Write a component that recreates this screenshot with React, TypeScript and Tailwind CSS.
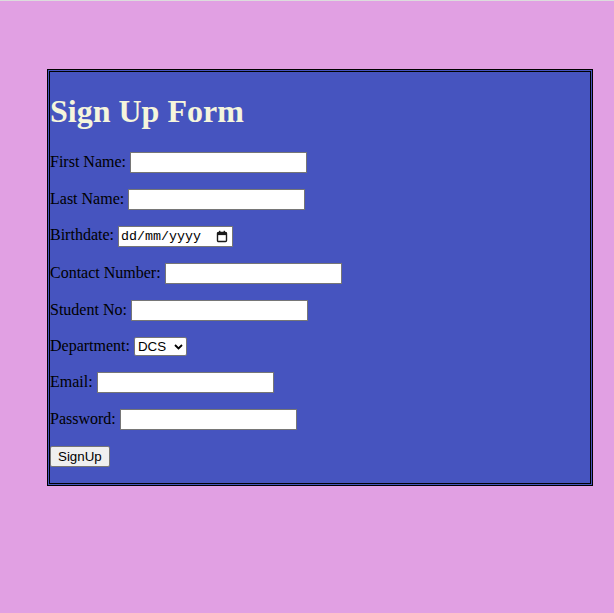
const textFields = [
  { label: "First Name", type: "text" },
  { label: "Last Name", type: "text" },
];

const moreFields = [
  { label: "Contact Number", type: "text" },
  { label: "Student No", type: "text" },
];

const inputCls =
  "inline-block w-[177px] h-[21px] border border-[#767676] bg-white px-[2px] py-[1px] align-baseline font-['Liberation_Sans',Arial,sans-serif] text-[13.33px] text-black";

const CalendarIcon = () => (
  <svg width="12" height="13" viewBox="0 0 12 13" className="block">
    <rect x="1.5" y="2.5" width="9" height="9" rx="1" fill="none" stroke="#1a1a1a" strokeWidth="1.4" />
    <rect x="1.5" y="2.5" width="9" height="2.6" fill="#1a1a1a" />
    <rect x="3" y="0.8" width="1.4" height="2" fill="#1a1a1a" />
    <rect x="7.6" y="0.8" width="1.4" height="2" fill="#1a1a1a" />
  </svg>
);

export default function App() {
  return (
    <div className="min-h-screen border-t border-[#dcdcdc] bg-[#e1a0e3] pt-[68px] pl-[47px] font-['Liberation_Serif','Times_New_Roman',serif] leading-[normal] text-black">
      <div className="w-[546px] border-[3px] border-double border-black bg-[#4654bf]">
        <h1 className="my-[21.44px] text-[32px] font-bold text-[#f5f5dc]">Sign Up Form</h1>

        {textFields.map((f) => (
          <p key={f.label} className="my-4 text-[16px]">
            {f.label}: <input type={f.type} className={inputCls} />
          </p>
        ))}

        {/* date field drawn by hand so the dd/mm/yyyy format is fixed */}
        <p className="my-4 text-[16px]">
          Birthdate:{" "}
          <span className="inline-flex h-[21px] w-[115px] items-center justify-between border border-[#767676] bg-white pl-[2px] pr-[4px] align-baseline font-['Liberation_Mono','Courier_New',monospace] text-[13.33px]">
            <span>dd/mm/yyyy</span>
            <CalendarIcon />
          </span>
        </p>

        {moreFields.map((f) => (
          <p key={f.label} className="my-4 text-[16px]">
            {f.label}: <input type={f.type} className={inputCls} />
          </p>
        ))}

        <p className="my-4 text-[16px]">
          Department:{" "}
          <span className="relative inline-block align-baseline">
            <select className="h-[19px] w-[53px] appearance-none rounded-[2px] border border-[#767676] bg-white pl-[3px] font-['Liberation_Sans',Arial,sans-serif] text-[13.33px] text-black">
              <option>DCS</option>
            </select>
            <svg
              width="9"
              height="6"
              viewBox="0 0 9 6"
              className="pointer-events-none absolute right-[4px] top-[7px]"
            >
              <path d="M1 1l3.5 3.5L8 1" fill="none" stroke="#000" strokeWidth="1.8" />
            </svg>
          </span>
        </p>

        <p className="my-4 text-[16px]">
          Email: <input type="email" className={inputCls} />
        </p>

        <p className="my-4 text-[16px]">
          Password: <input type="password" className={inputCls} />
        </p>

        <p className="my-4 text-[16px]">
          <button className="h-[21px] rounded-[2px] border border-[#767676] bg-[#efefef] px-[7px] font-['Liberation_Sans',Arial,sans-serif] text-[13.33px] text-black">
            SignUp
          </button>
        </p>
      </div>
    </div>
  );
}
